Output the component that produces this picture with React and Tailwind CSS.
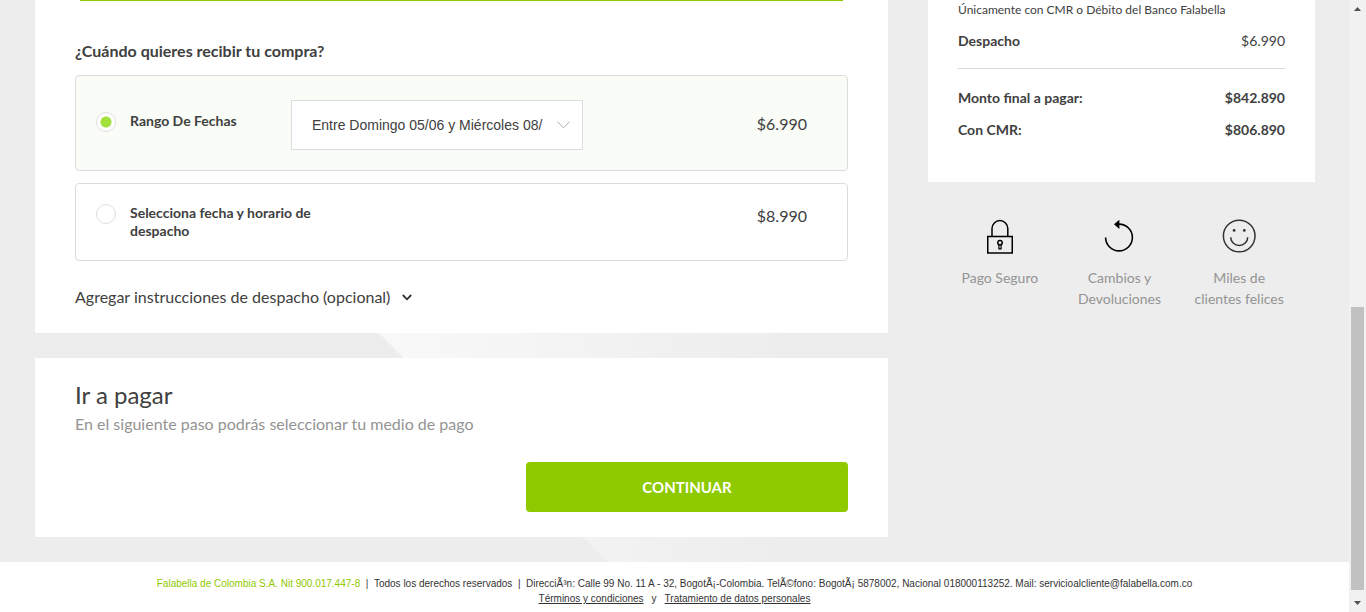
import React, { useState } from "react";

const trust = [
  { label: "Pago Seguro", Icon: LockIcon },
  { label: "Cambios y Devoluciones", Icon: ReturnIcon },
  { label: "Miles de clientes felices", Icon: SmileIcon },
];

function LockIcon() {
  return (
    <svg width="28" height="35" viewBox="0 0 28 35" fill="none" stroke="#000" strokeWidth="1.5" aria-hidden="true">
      <rect x="1.75" y="17.500" width="24.5" height="16.5" />
      <path d="M6 17.500V9.500a7.9 7.9 0 0 1 15.8 0v8" />
      <circle cx="14" cy="23.8" r="2.2" />
      <path d="M12.9 25.7v4.2h2.2v-4.2" strokeWidth="1.2" />
    </svg>
  );
}

function ReturnIcon() {
  return (
    <svg width="30" height="35" viewBox="0 0 30 35" fill="none" stroke="#000" strokeWidth="1.6" aria-hidden="true">
      <path d="M1.6 18.500a13.4 13.4 0 1 0 13.4 -13.4" />
      <path d="M10 5.300L15.4.8v9.2z" fill="#000" stroke="none" />
    </svg>
  );
}

function SmileIcon() {
  return (
    <svg width="34" height="35" viewBox="0 0 34 35" fill="none" stroke="#333" strokeWidth="1.5" aria-hidden="true">
      <circle cx="17.2" cy="17" r="15.8" />
      <path d="M8.7 18.2a8.5 8.2 0 0 0 17 0" />
      <circle cx="12.1" cy="11.4" r="1.4" fill="#333" stroke="none" />
      <circle cx="22.3" cy="11.4" r="1.4" fill="#333" stroke="none" />
    </svg>
  );
}

function Backdrop() {
  return (
    <svg className="absolute left-[329px] top-[283px] h-[280px] w-[500px]" viewBox="0 0 500 280" aria-hidden="true">
      <defs>
        <linearGradient id="sheen" x1="0" x2="1" y1="0" y2="0">
          <stop offset="0.1" stopColor="#f9f9f9" />
          <stop offset="0.9" stopColor="#ededed" />
        </linearGradient>
      </defs>
      <path d="M0 0H500V280H280Z" fill="url(#sheen)" />
    </svg>
  );
}

function Radio(props) {
  return (
    <input
      type="radio"
      name="delivery"
      className="size-5 shrink-0 cursor-pointer appearance-none rounded-full border border-[#dfdfdf] bg-white checked:bg-[radial-gradient(circle,#a4e03c_5px,#fff_6px)]"
      {...props}
    />
  );
}

function Row({ label, value, light }) {
  return (
    <div className="flex justify-between text-sm leading-5">
      <dt className="font-bold">{label}</dt>
      <dd className={light ? "font-normal" : "font-bold"}>{value}</dd>
    </div>
  );
}

function ScrollRail() {
  return (
    <div className="flex w-[17px] shrink-0 flex-col items-center bg-[#f1f1f1]" aria-hidden="true">
      <svg width="17" height="17" viewBox="0 0 17 17">
        <path d="M5 11h7L8.500 7z" fill="#505050" />
      </svg>
      <div className="grow-[290]" />
      <div className="w-[13px] grow-[283] bg-[#c1c1c1]" />
      <div className="h-[5px]" />
      <svg width="17" height="17" viewBox="0 0 17 17">
        <path d="M5 6h7L8.500 10z" fill="#505050" />
      </svg>
    </div>
  );
}

export default function App() {
  const [delivery, setDelivery] = useState("range");
  return (
    <div className="flex min-h-screen bg-[#ededed] font-['Lato',sans-serif] text-[#404040]">
      <div className="relative flex min-w-0 flex-1 flex-col">
        <Backdrop />
        <div className="relative grid grid-cols-[minmax(0,1fr)_387px] items-start gap-10 pr-[34px] pb-[25px] pl-[35px]">
          <main className="flex flex-col gap-[25px]">
            <section className="bg-white px-10 pb-6">
              <div className="mx-[5px] h-px bg-[#8fca00]" />
              <h2 className="mt-[38px] text-base leading-6 font-bold">¿Cuándo quieres recibir tu compra?</h2>
              <div className="mt-3 flex items-start rounded border border-[#dadcda] bg-[#fafcf7] pt-6 pr-10 pb-5 pl-5">
                <div className="mt-3 flex w-[195px] shrink-0 gap-[14px]">
                  <Radio id="range" checked={delivery === "range"} onChange={() => setDelivery("range")} />
                  <label htmlFor="range" className="text-sm leading-[18px] font-bold">Rango De Fechas</label>
                </div>
                <div className="relative w-[292px]">
                  <select
                    aria-label="Rango de fechas"
                    className="h-[50px] w-full appearance-none rounded-none border border-[#dadddd] bg-white pr-8 pl-5 font-['Liberation_Sans',sans-serif] text-sm text-[#404040]"
                  >
                    <option>Entre Domingo 05/06 y Miércoles 08/</option>
                  </select>
                  <svg className="pointer-events-none absolute top-[21px] right-[13px]" width="13" height="8" viewBox="0 0 13 8" fill="none" stroke="#aaa" aria-hidden="true">
                    <path d="M.5.7L6.500 6.900L12.500.7" />
                  </svg>
                </div>
                <span className="mt-3 ml-auto text-base leading-6">$6.990</span>
              </div>
              <div className="mt-3 flex items-start rounded border border-[#dadcda] bg-white py-5 pr-10 pl-5">
                <div className="flex w-[220px] gap-[14px]">
                  <Radio id="slot" checked={delivery === "slot"} onChange={() => setDelivery("slot")} />
                  <label htmlFor="slot" className="text-sm leading-[18px] font-bold">Selecciona fecha y horario de despacho</label>
                </div>
                <span className="ml-auto text-base leading-6">$8.990</span>
              </div>
              <button type="button" className="mt-6 flex items-center gap-3 text-base leading-6">
                Agregar instrucciones de despacho (opcional)
                <svg width="10" height="7" viewBox="0 0 10 7" fill="none" stroke="#333" strokeWidth="1.800" aria-hidden="true">
                  <path d="M.8 1L5 5.300L9.200 1" />
                </svg>
              </button>
            </section>

            <section className="flex flex-col bg-white px-10 pt-[22px] pb-[25px]">
              <h2 className="text-2xl leading-[30px]">Ir a pagar</h2>
              <p className="mt-0.5 text-base leading-6 text-[#949494]">En el siguiente paso podrás seleccionar tu medio de pago</p>
              <button type="button" className="mt-[26px] h-[50px] w-[322px] self-end rounded bg-[#8fca00] text-[15px] font-bold text-white">
                CONTINUAR
              </button>
            </section>
          </main>

          <aside>
            <div className="bg-white px-[30px] pt-px pb-[42px]">
              <p className="text-xs leading-[18px]">Únicamente con CMR o Débito del Banco Falabella</p>
              <dl className="mt-3 border-b border-[#dcdcdc] pb-[17px]">
                <Row label="Despacho" value="$6.990" light />
              </dl>
              <dl className="mt-[19px] flex flex-col gap-3">
                <Row label="Monto final a pagar:" value="$842.890" />
                <Row label="Con CMR:" value="$806.890" />
              </dl>
            </div>
            <ul className="mt-[37px] grid grid-cols-3 pr-4 pl-3 text-center text-sm leading-[21px] text-[#949494]">
              {trust.map(({ label, Icon }) => (
                <li key={label} className="flex flex-col items-center gap-[13px] px-3">
                  <Icon />
                  {label}
                </li>
              ))}
            </ul>
          </aside>
        </div>

        <footer className="relative flex-1 bg-white pt-[14px] pb-1.5 text-center font-['Liberation_Sans',sans-serif] text-[10px] leading-[15px] text-[#333]">
          <p>
            <span className="text-[#8fca00]">Falabella de Colombia S.A. Nit 900.017.447-8</span>
            &nbsp; | &nbsp;Todos los derechos reservados &nbsp;|&nbsp; DirecciÃ³n: Calle 99 No. 11 A - 32, BogotÃ¡-Colombia. TelÃ©fono: BogotÃ¡ 5878002, Nacional 018000113252. Mail: servicioalcliente@falabella.com.co
          </p>
          <p>
            <a href="#terminos" className="underline">Términos y condiciones</a>
            <span className="mx-2">y</span>
            <a href="#datos" className="underline">Tratamiento de datos personales</a>
          </p>
        </footer>
      </div>
      <ScrollRail />
    </div>
  );
}
